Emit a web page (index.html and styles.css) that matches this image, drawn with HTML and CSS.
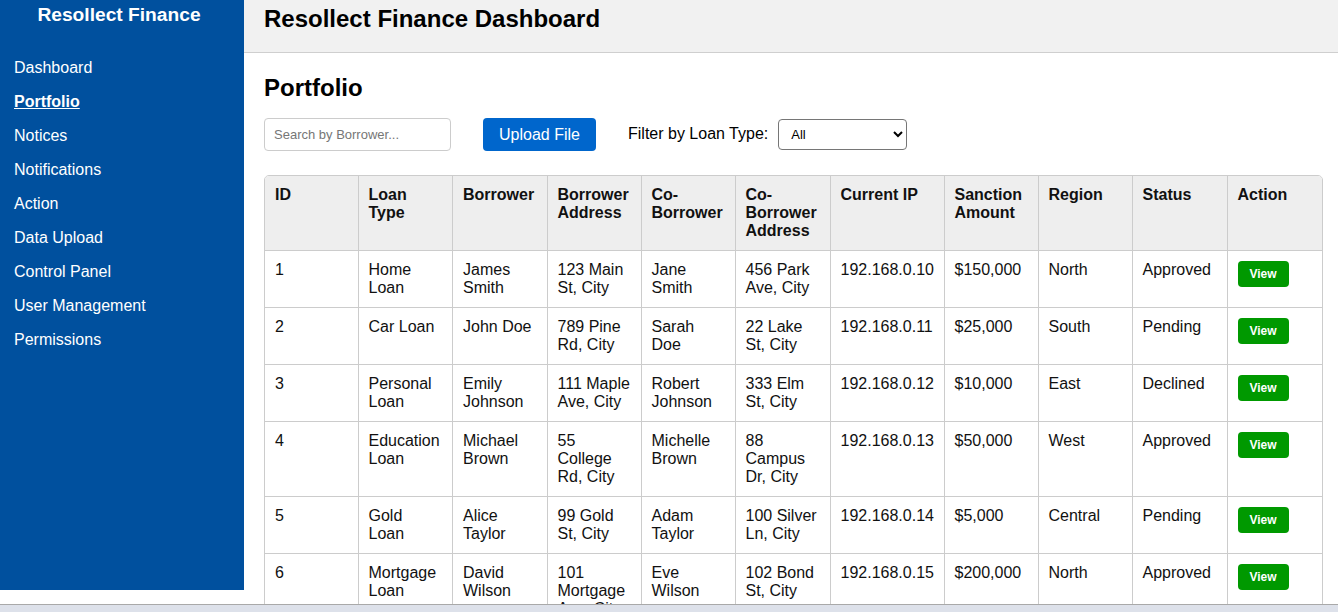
FILE: index.html
```html
<!DOCTYPE html>
<html lang="en">
<head>
<meta charset="utf-8">
<title>Resollect Finance Dashboard</title>
<link rel="stylesheet" href="styles.css">
</head>
<body>
<div class="layout">
  <aside class="sidebar">
    <h2 class="brand">Resollect Finance</h2>
    <ul class="nav">
      <li><a href="#">Dashboard</a></li>
      <li><a href="#" class="active">Portfolio</a></li>
      <li><a href="#">Notices</a></li>
      <li><a href="#">Notifications</a></li>
      <li><a href="#">Action</a></li>
      <li><a href="#">Data Upload</a></li>
      <li><a href="#">Control Panel</a></li>
      <li><a href="#">User Management</a></li>
      <li><a href="#">Permissions</a></li>
    </ul>
  </aside>
  <div class="main">
    <header class="topbar">
      <h1>Resollect Finance Dashboard</h1>
    </header>
    <section class="content">
      <h2 class="page-title">Portfolio</h2>
      <div class="controls">
        <input class="search" type="text" placeholder="Search by Borrower...">
        <button class="upload">Upload File</button>
        <label class="filter-label">Filter by Loan Type:</label>
        <select class="filter">
          <option>All</option>
        </select>
      </div>
      <div class="table-wrap">
        <table class="loans">
          <colgroup>
            <col class="c-id"><col class="c-type"><col class="c-borrower"><col class="c94"><col class="c94"><col class="c95"><col class="c114"><col class="c94"><col class="c94"><col class="c95"><col class="c96">
          </colgroup>
          <thead>
            <tr>
              <th>ID</th><th>Loan Type</th><th>Borrower</th><th>Borrower Address</th><th>Co-Borrower</th><th>Co-Borrower Address</th><th>Current IP</th><th>Sanction Amount</th><th>Region</th><th>Status</th><th>Action</th>
            </tr>
          </thead>
          <tbody>
            <tr><td>1</td><td>Home Loan</td><td>James Smith</td><td>123 Main St, City</td><td>Jane Smith</td><td>456 Park Ave, City</td><td>192.168.0.10</td><td>$150,000</td><td>North</td><td>Approved</td><td><button class="view">View</button></td></tr>
            <tr><td>2</td><td>Car Loan</td><td>John Doe</td><td>789 Pine Rd, City</td><td>Sarah Doe</td><td>22 Lake St, City</td><td>192.168.0.11</td><td>$25,000</td><td>South</td><td>Pending</td><td><button class="view">View</button></td></tr>
            <tr><td>3</td><td>Personal Loan</td><td>Emily Johnson</td><td>111 Maple Ave, City</td><td>Robert Johnson</td><td>333 Elm St, City</td><td>192.168.0.12</td><td>$10,000</td><td>East</td><td>Declined</td><td><button class="view">View</button></td></tr>
            <tr><td>4</td><td>Education Loan</td><td>Michael Brown</td><td>55 College Rd, City</td><td>Michelle Brown</td><td>88 Campus Dr, City</td><td>192.168.0.13</td><td>$50,000</td><td>West</td><td>Approved</td><td><button class="view">View</button></td></tr>
            <tr><td>5</td><td>Gold Loan</td><td>Alice Taylor</td><td>99 Gold St, City</td><td>Adam Taylor</td><td>100 Silver Ln, City</td><td>192.168.0.14</td><td>$5,000</td><td>Central</td><td>Pending</td><td><button class="view">View</button></td></tr>
            <tr><td>6</td><td>Mortgage Loan</td><td>David Wilson</td><td>101 Mortgage Ave, City</td><td>Eve Wilson</td><td>102 Bond St, City</td><td>192.168.0.15</td><td>$200,000</td><td>North</td><td>Approved</td><td><button class="view">View</button></td></tr>
          </tbody>
        </table>
      </div>
    </section>
  </div>
</div>
<div class="taskbar"></div>
</body>
</html>
```

FILE: styles.css
```css
* { box-sizing: border-box; }

html, body {
  margin: 0;
  padding: 0;
}

body {
  font-family: "Liberation Sans", Arial, sans-serif;
  font-size: 16px;
  color: #000;
  background: #fff;
}

.layout {
  display: flex;
  align-items: flex-start;
}

.sidebar {
  flex: 0 0 244px;
  width: 244px;
  height: 590px;
  background: #00509e;
  color: #fff;
  padding: 4px 0 0 14px;
}

.brand {
  margin: 0;
  padding-right: 20px;
  font-size: 19.2px;
  font-weight: bold;
  text-align: center;
  line-height: 22px;
}

.nav {
  list-style: none;
  margin: 25px 0 0;
  padding: 0;
}

.nav li {
  height: 34px;
  line-height: 34px;
}

.nav a {
  color: #fff;
  text-decoration: none;
  font-size: 16px;
}

.nav a.active {
  font-weight: bold;
  text-decoration: underline;
}

.main {
  flex: 1 1 auto;
  min-width: 0;
}

.topbar {
  height: 53px;
  background: #f1f1f1;
  border-bottom: 1px solid #cfcfcf;
  padding: 5px 20px 0;
}

.topbar h1 {
  margin: 0;
  font-size: 24px;
  line-height: 27.6px;
  font-weight: bold;
}

.content {
  padding: 21px 15px 20px 20px;
}

.page-title {
  margin: 0 0 16px;
  font-size: 24px;
  line-height: 27.6px;
  font-weight: bold;
}

.controls {
  display: flex;
  align-items: center;
  margin-bottom: 24px;
}

.search {
  width: 187px;
  height: 33px;
  border: 1px solid #cccccc;
  border-radius: 4px;
  padding: 0 9px;
  font-family: "Liberation Sans", Arial, sans-serif;
  font-size: 13px;
  color: #000;
  background: #fff;
}

.search::placeholder {
  color: #767676;
}

.upload {
  margin-left: 32px;
  width: 113px;
  height: 33px;
  background: #0066cc;
  color: #fff;
  border: none;
  border-radius: 4px;
  font-family: "Liberation Sans", Arial, sans-serif;
  font-size: 16px;
  line-height: 18px;
  padding: 1px 0 0;
}

.filter-label {
  margin-left: 32px;
  font-size: 16px;
}

.filter {
  margin-left: 10px;
  width: 129px;
  height: 31px;
  border: 1px solid #767676;
  border-radius: 4px;
  background: #fff;
  font-family: "Liberation Sans", Arial, sans-serif;
  font-size: 13px;
  padding: 0 8px;
  color: #000;
}

.table-wrap {
  border: 1px solid #cccccc;
  border-radius: 5px;
  overflow: hidden;
}

.loans {
  width: 100%;
  border-collapse: collapse;
  table-layout: fixed;
}

.c-id { width: 93px; }
.c-type { width: 94.5px; }
.c-borrower { width: 94.5px; }
.c94 { width: 94px; }
.c95 { width: 95px; }
.c96 { width: 96px; }
.c114 { width: 114px; }

.loans th,
.loans td {
  border: 1px solid #cccccc;
  padding: 10px 10px;
  text-align: left;
  vertical-align: top;
  font-size: 16px;
  line-height: 18px;
  color: #111;
}

.loans th {
  background: #eeeeee;
  font-weight: bold;
}

.loans tr > :first-child { border-left: none; }
.loans tr > :last-child { border-right: none; }
.loans thead tr th { border-top: none; }

.view {
  display: block;
  background: #009900;
  color: #fff;
  border: none;
  border-radius: 4px;
  font-family: "Liberation Sans", Arial, sans-serif;
  font-size: 12px;
  font-weight: bold;
  padding: 6px 12px;
  line-height: 14px;
}

.taskbar {
  position: fixed;
  left: 0;
  right: 0;
  bottom: 0;
  height: 8px;
  background: #dde1ea;
  border-top: 1px solid #a9a9a9;
}
```
